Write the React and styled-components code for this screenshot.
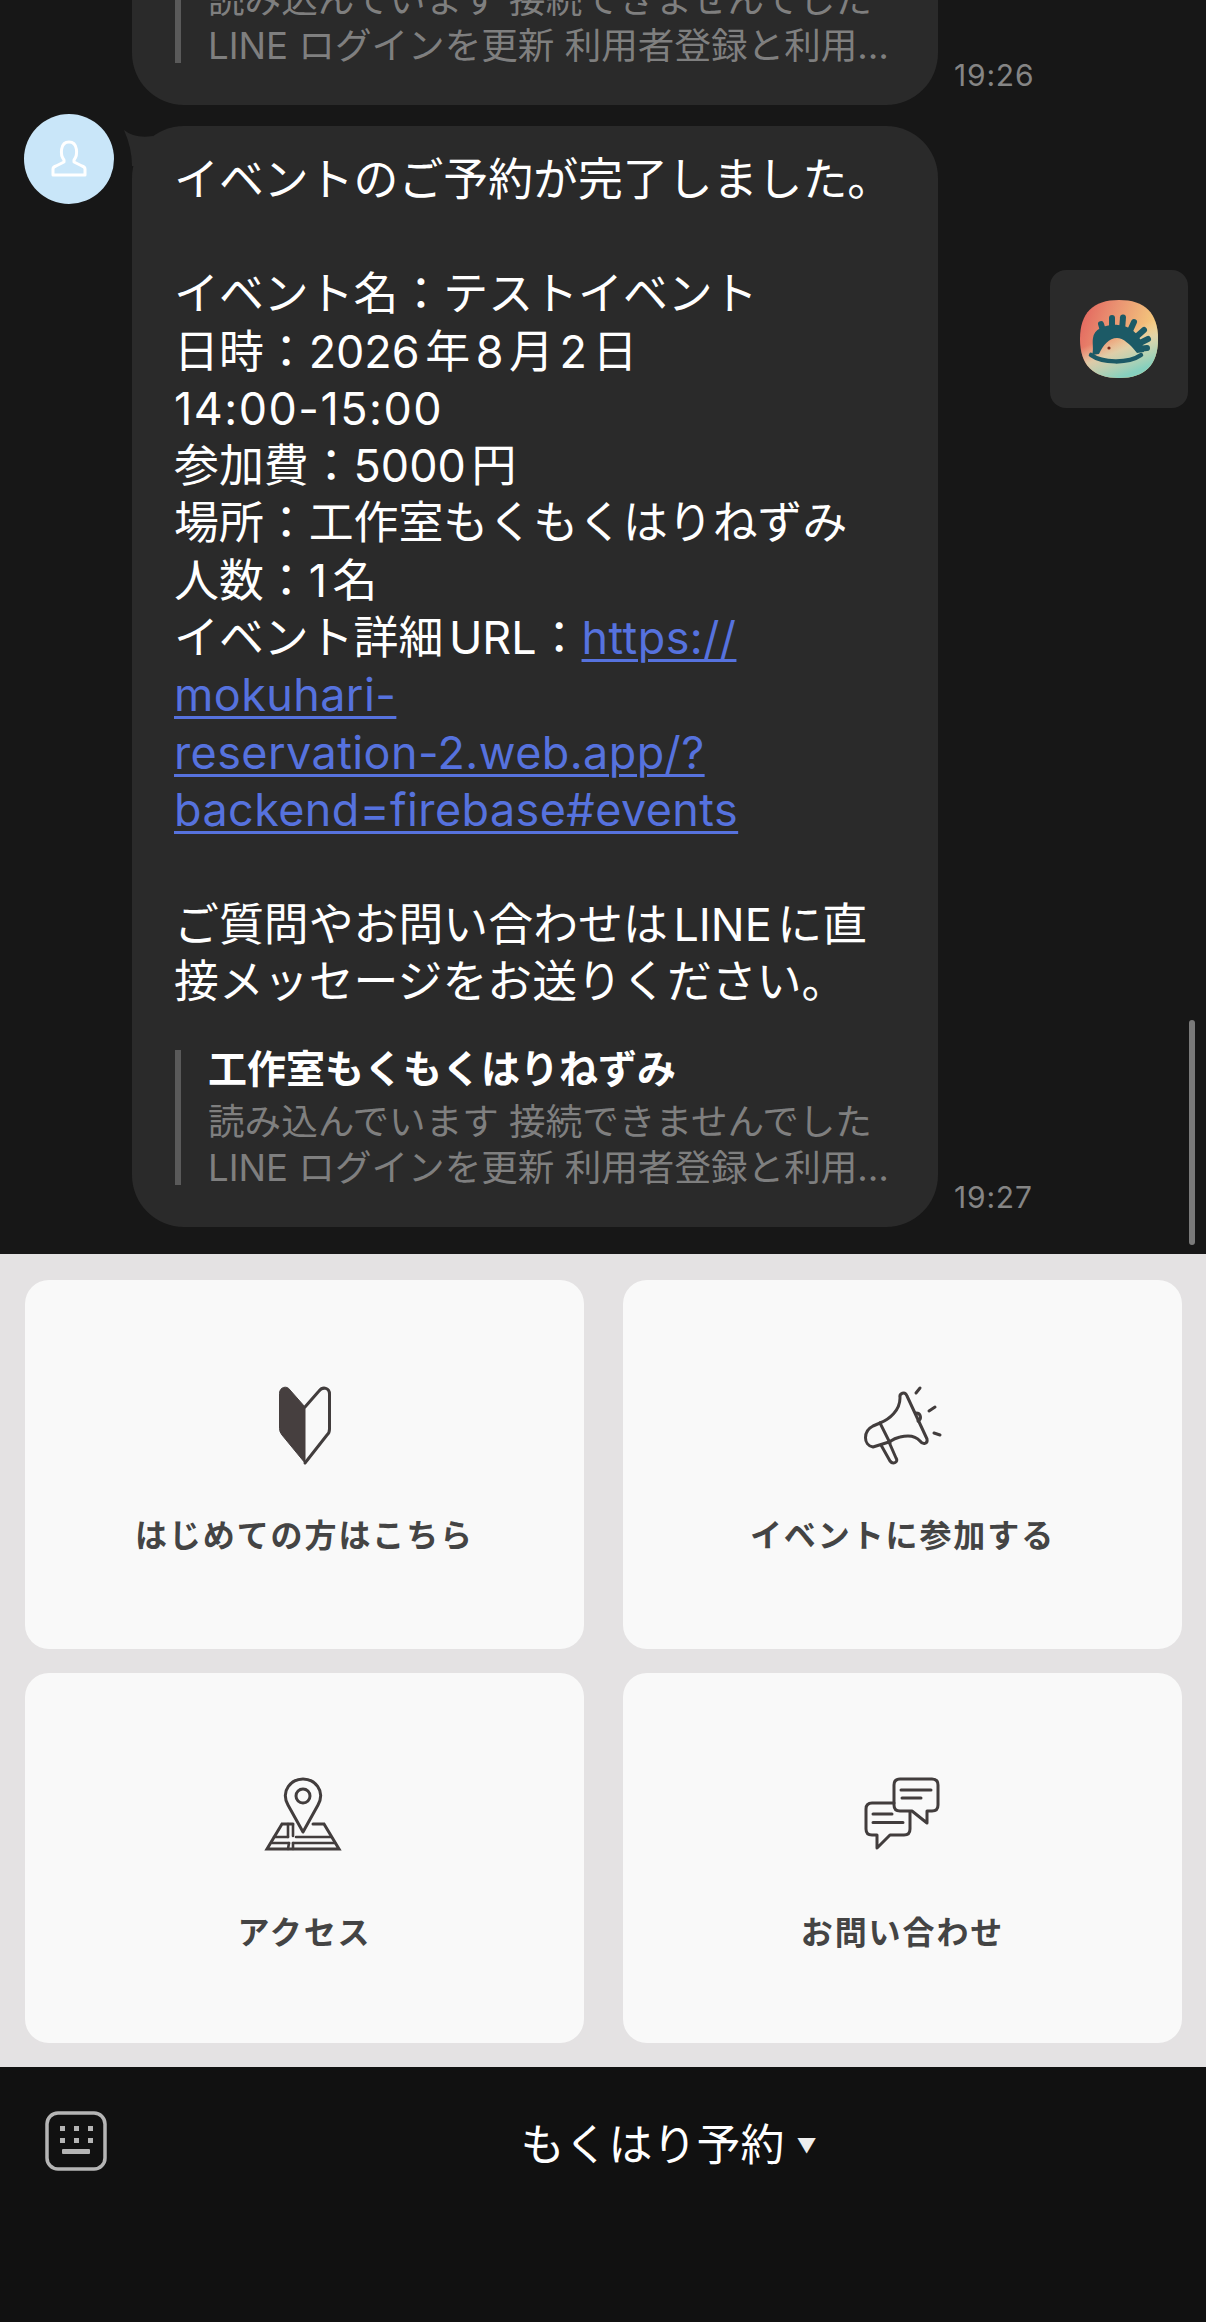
import React from "react";
import styled, { createGlobalStyle } from "styled-components";

const Global = createGlobalStyle`
  html, body { margin: 0; padding: 0; background: #111; }
  body { font-family: Inter, "Noto Sans CJK JP", sans-serif; text-autospace: normal; }
`;
const Page = styled.div`
  width: 1206px; height: 2322px; display: flex; flex-direction: column; overflow: hidden;
`;
const Chat = styled.section`
  position: relative; height: 1254px; flex: none; background: #171717; overflow: hidden;
  display: flex; flex-direction: column; justify-content: flex-end; gap: 21px; padding: 0 0 27px 24px; box-sizing: border-box;
`;
const Row = styled.div`
  display: flex; align-items: flex-start; flex: none;
`;
const Avatar = styled.div`
  width: 90px; height: 90px; margin-top: -12px; border-radius: 50%; background: #c9e6f9; flex: none;
  display: flex; align-items: center; justify-content: center;
`;
const AvatarGap = styled.div`
  width: 90px; flex: none;
`;
const Bubble = styled.div`
  position: relative; width: 806px; margin-left: 18px; box-sizing: border-box; flex: none;
  background: #2a2a2a; border-radius: 52px; padding: 25.5px 42px 42px 42px;
`;
const Tail = styled.svg`
  position: absolute; left: -9px; top: 0;
`;
const MessageText = styled.div`
  color: #fff; font-size: 44.9px; line-height: 57.3px; margin-bottom: 38.9px; white-space: nowrap;
`;
const Num = styled.span`
  letter-spacing: 1.5px;
`;
const Link = styled.span`
  color: #5672de; text-decoration: underline; text-underline-offset: 5px; text-decoration-thickness: 3px; letter-spacing: 0.45px;
`;
const Quote = styled.div`
  height: 135px; border-left: 6px solid #5a5a5a; padding-left: 27px; white-space: nowrap; margin-left: 1px;
`;
const QuoteTitle = styled.div`
  color: #fff; font-size: 39px; line-height: 37px; font-weight: 700; margin-bottom: 12px;
`;
const QuoteBody = styled.div`
  color: #7f7f7f; font-size: 36.6px; line-height: 46px;
`;
const Time = styled.div`
  align-self: flex-end; margin: 0 0 15px 16px; color: #858585; font-size: 30px; line-height: 30px; letter-spacing: 0.8px;
`;
const Share = styled.button`
  position: absolute; left: 1050px; top: 270px; width: 138px; height: 138px; border: 0; padding: 0;
  background: #2a2a2a; border-radius: 16px; display: flex; align-items: center; justify-content: center;
`;
const ScrollThumb = styled.div`
  position: absolute; left: 1189px; top: 1020px; width: 6px; height: 225px; border-radius: 3px; background: #7a7a7a;
`;
const Menu = styled.nav`
  height: 813px; flex: none; background: #e4e2e3; box-sizing: border-box; padding: 26px 0 0 25px;
  display: grid; grid-template-columns: 559px 559px; grid-template-rows: 369px 370px; column-gap: 39px; row-gap: 24px;
`;
const Card = styled.div`
  background: #f9f9f9; border-radius: 24px; display: flex; flex-direction: column; align-items: center;
  padding-top: ${p => p.$top}px; box-sizing: border-box;
`;
const IconSvg = styled.svg`
  width: 170px; height: 130px; flex: none;
  fill: none; stroke: #423d3d; stroke-width: 3; stroke-linecap: round; stroke-linejoin: round;
`;
const Label = styled.div`
  margin-top: ${p => p.$gap}px; color: #444; font-size: 32px; line-height: 44px; font-weight: 700; letter-spacing: 1.9px;
`;
const Footer = styled.footer`
  flex: 1; background: #111; display: flex; align-items: flex-start; padding: 44px 0 0 45px;
`;
const KeyboardIcon = styled.svg`
  width: 62px; height: 60px; flex: none;
`;
const Title = styled.div`
  flex: 1; padding-left: 24px; margin-top: 3px; display: flex; justify-content: center; align-items: center; gap: 12px;
  color: #fff; font-size: 44px; line-height: 60px;
`;
const Caret = styled.span`
  font-size: 20px; line-height: 60px; color: #eee; padding-top: 2px;
`;

const AvatarIcon = () => (
  <svg width="36" height="38" viewBox="0 0 36 38" fill="none" stroke="#fff" strokeWidth="3" strokeLinejoin="round">
    <path d="M2 35 V29 Q2 27 5 26 L13 22 V20 C9 15 9 2 18 2 C27 2 27 15 23 20 V22 L31 26 Q34 27 34 29 V35 Z" />
  </svg>
);

const HedgehogLogo = () => (
  <svg width="78" height="78" viewBox="0 0 78 78">
    <defs>
      <linearGradient id="base" x1="0" y1="0" x2="1" y2="0.35">
        <stop offset="0" stopColor="#e25f5b" />
        <stop offset="0.45" stopColor="#ea9372" />
        <stop offset="1" stopColor="#f5cf7e" />
      </linearGradient>
      <linearGradient id="sea" x1="0.3" y1="0.5" x2="0.5" y2="1">
        <stop offset="0" stopColor="#f2d6ae" stopOpacity="0" />
        <stop offset="0.4" stopColor="#dcd6b2" stopOpacity="0.85" />
        <stop offset="1" stopColor="#86d0be" />
      </linearGradient>
      <clipPath id="squircle">
        <path d="M39 0 C65 0 78 13 78 39 C78 65 65 78 39 78 C13 78 0 65 0 39 C0 13 13 0 39 0 Z" />
      </clipPath>
    </defs>
    <g clipPath="url(#squircle)">
      <rect width="78" height="78" fill="url(#base)" />
      <rect width="78" height="78" fill="url(#sea)" />
    </g>
    <g stroke="#1c5a66" strokeWidth="6" strokeLinecap="round" fill="none">
      <path d="M24 34 L21 24" />
      <path d="M32 30 L32 18" />
      <path d="M42 30 L43 17.5" />
      <path d="M49 33 L54 22" />
      <path d="M55 38 L64 30" />
      <path d="M58 44 L68 39" />
      <path d="M58 49 L67 48" />
    </g>
    <path d="M13 38 C14 29 26 24 38 25 C50 26 62 34 64 52 L57 53 C50 44 43 38 37 38 C29 38 23 45 19 54 L12 55 C14 50 12 43 13 38 Z" fill="#1c5a66" />
    <path d="M11 55 C22 63 48 64 61 55" stroke="#1c5a66" strokeWidth="4.5" strokeLinecap="round" fill="none" />
    <circle cx="29" cy="48" r="1.6" fill="#7a2e1e" />
  </svg>
);

const Beginner = () => (
  <IconSvg viewBox="-10 0 170 130">
    <path d="M49.5 33 C49.5 27 57 25 60 30 L75 47 V103 L52 75 Q49.5 72 49.5 69 Z" fill="#463f3f" stroke="#463f3f" strokeWidth="1" />
    <path d="M75 47 L89 31 C93 26 99.5 28 99.5 34 V69 Q99.5 73 97 75 L75 103" />
  </IconSvg>
);
const Megaphone = () => (
  <IconSvg viewBox="-12 0 170 130" strokeWidth="2.6">
    <path d="M50 63 C60 59 70 50 70 38 C69 33 75 31 77 36 L97 79 C98 84 93 85 90 81 C85 75 78 75 70 77 C65 78 62 80 59 82" />
    <path d="M50 63 L43 66 C33 71 33 85 43 87 L59 82" />
    <path d="M50 63 L60 83" />
    <path d="M51 85 L60 101 C63 105 69 102 66 98 L59 82" />
    <path d="M86 53 C91 53 92 59 88 61" />
    <path d="M86 33 L90 28 M99 51 L105 47 M104 73 L110 75" strokeWidth="3" />
  </IconSvg>
);
const MapPin = () => (
  <IconSvg viewBox="-10 0 170 130">
    <path d="M73 72 L58 45 C50 30 62 19 73 19 C84 19 96 30 88 45 Z" />
    <circle cx="73" cy="36" r="7" />
    <path d="M63 64 H52 L37 89 H109 L94 64 H83" strokeLinejoin="miter" />
    <path d="M58 64 L58 77 M63 65 V76 M59 83 L58 89 M63 83 V89" strokeWidth="2.6" />
    <path d="M44 77 H58 M66 77 H101 M42 83 H59 M63 83 H105" strokeWidth="2.6" />
  </IconSvg>
);
const Chats = () => (
  <IconSvg viewBox="-12 0 170 130">
    <path d="M70 19 H102 Q108 19 108 25 V45 Q108 51 102 51 H97 V63 L82 51 H70 Q64 51 64 45 V25 Q64 19 70 19 Z" />
    <path d="M71 30 H101 M72 38 H91" />
    <path d="M64 43 H42 Q36 43 36 49 V69 Q36 75 42 75 H47 V88 L60 75 H74 Q80 75 80 69 V52" />
    <path d="M43 54 H62 M43 62.5 H73" />
  </IconSvg>
);

const ShopQuote = () => (
  <Quote>
    <QuoteTitle>工作室もくもくはりねずみ</QuoteTitle>
    <QuoteBody>読み込んでいます 接続できませんでした</QuoteBody>
    <QuoteBody>LINE ログインを更新 利用者登録と利用…</QuoteBody>
  </Quote>
);

export default function App() {
  return (
    <Page>
      <Global />
      <Chat>
        <Row>
          <AvatarGap />
          <Bubble>
            <ShopQuote />
          </Bubble>
          <Time>19:26</Time>
        </Row>
        <Row>
          <Avatar><AvatarIcon /></Avatar>
          <Bubble>
            <Tail width="40" height="50" viewBox="0 0 40 50"><path d="M1 4 Q12 13 30 10 L30 40 L9 40 Q9 22 1 4 Z" fill="#2a2a2a" /></Tail>
            <MessageText>
              イベントのご予約が完了しました。<br /><br />
              イベント名：テストイベント<br />
              日時：2026年8月2日<br />
              <Num>14:00-15:00</Num><br />
              参加費：5000円<br />
              場所：工作室もくもくはりねずみ<br />
              人数：1名<br />
              イベント詳細URL：<Link>https://</Link><br />
              <Link>mokuhari-</Link><br />
              <Link>reservation-2.web.app/?</Link><br />
              <Link>backend=firebase#events</Link><br /><br />
              ご質問やお問い合わせはLINEに直<br />
              接メッセージをお送りください。
            </MessageText>
            <ShopQuote />
          </Bubble>
          <Time>19:27</Time>
        </Row>
        <Share><HedgehogLogo /></Share>
        <ScrollThumb />
      </Chat>
      <Menu>
        <Card $top={80}><Beginner /><Label $gap={24}>はじめての方はこちら</Label></Card>
        <Card $top={80}><Megaphone /><Label $gap={24}>イベントに参加する</Label></Card>
        <Card $top={87}><MapPin /><Label $gap={21}>アクセス</Label></Card>
        <Card $top={87}><Chats /><Label $gap={21}>お問い合わせ</Label></Card>
      </Menu>
      <Footer>
        <KeyboardIcon viewBox="0 0 62 60">
          <rect x="2" y="2" width="58" height="56" rx="11" fill="none" stroke="#b5b5b5" strokeWidth="3.5" />
          <g fill="#b5b5b5">
            <rect x="15" y="15" width="5" height="5" /><rect x="29" y="15" width="5" height="5" /><rect x="43" y="15" width="5" height="5" />
            <rect x="15" y="27" width="5" height="5" /><rect x="29" y="27" width="5" height="5" /><rect x="43" y="27" width="5" height="5" />
            <rect x="17" y="38" width="28" height="5" rx="1" />
          </g>
        </KeyboardIcon>
        <Title>もくはり予約<Caret>▼</Caret></Title>
      </Footer>
    </Page>
  );
}
